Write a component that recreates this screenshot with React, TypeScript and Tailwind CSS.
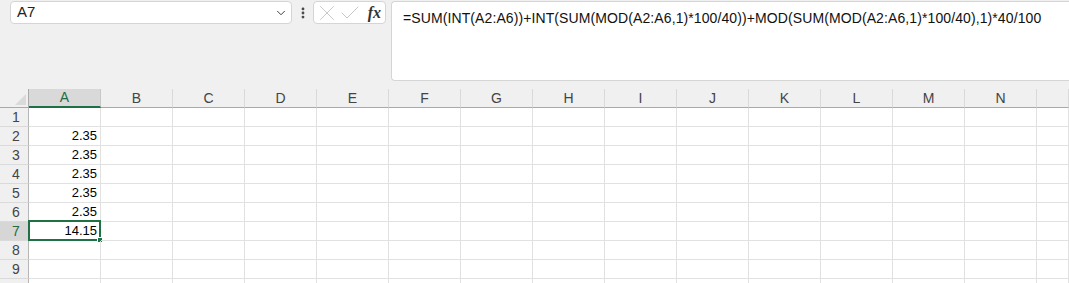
import React from 'react';
import { ChevronDown, EllipsisVertical, X, Check } from 'lucide-react';

const COLS = ['A', 'B', 'C', 'D', 'E', 'F', 'G', 'H', 'I', 'J', 'K', 'L', 'M', 'N', ''];
const VALUES: Record<number, string> = { 2: '2.35', 3: '2.35', 4: '2.35', 5: '2.35', 6: '2.35', 7: '14.15' };
const FORMULA = '=SUM(INT(A2:A6))+INT(SUM(MOD(A2:A6,1)*100/40))+MOD(SUM(MOD(A2:A6,1)*100/40),1)*40/100';

export default function App() {
	const rows = [1, 2, 3, 4, 5, 6, 7, 8, 9, 10];

	return (
		<div className="w-[1069px] h-[283px] overflow-hidden bg-[#f0f0f0] font-['Liberation_Sans',Arial,sans-serif] text-[#222]">
			{/* Toolbar - name box + formula bar */}
			<div className="h-[89px] flex items-start pt-[1px]">
				<div className="ml-[10px] w-[282px] h-[23px] bg-white border border-[#d5d5d5] rounded-[4px] flex items-center pl-[6px] pr-[3px]">
					<span className="flex-1 text-[15px] text-[#222]">A7</span>
					<ChevronDown size={14} strokeWidth={1.6} className="text-[#333]" />
				</div>
				<div className="w-[21px] h-[23px] flex items-center justify-center">
					<EllipsisVertical size={14} strokeWidth={2.8} className="text-[#444]" />
				</div>
				<div className="w-[73px] h-[23px] bg-white border border-[#d5d5d5] rounded-[4px] flex items-center pl-0 pr-[4px]">
					<X size={26} strokeWidth={0.8} className="shrink-0 text-[#c0c0c0]" />
					<Check size={24} strokeWidth={0.9} className="shrink-0 -ml-[2px] text-[#c0c0c0]" />
					<span className="ml-auto font-['Liberation_Serif',serif] italic font-bold text-[16px] text-[#333] leading-none">fx</span>
				</div>
				<div className="ml-[5px] flex-1 h-[80px] bg-white border border-[#d5d5d5] rounded-l-[4px] border-r-0 pl-[11px] pt-[4px]">
					<span className="text-[14px] tracking-[0.1px] text-[#111] whitespace-nowrap">{FORMULA}</span>
				</div>
			</div>

			{/* Sheet grid */}
			<div className="grid grid-cols-[29px_repeat(14,72px)_1fr] bg-white">
				{/* header row */}
				<div className="h-[19px] bg-[#f0f0f0] border-r border-b border-[#a9a9a9] relative">
					<div className="absolute right-[2px] bottom-[2px] w-0 h-0 border-l-[11px] border-l-transparent border-b-[11px] border-b-[#dadada]" />
				</div>
				{COLS.map((c) =>
					c === 'A' ? (
						<div key={c} className="h-[19px] bg-[#d9d9d9] border-r border-[#c8c8c8] border-b-2 border-b-[#1e7145] flex items-center justify-center text-[14px] text-[#1e6b44]">
							{c}
						</div>
					) : (
						<div key={c || 'o'} className="h-[19px] bg-[#f0f0f0] border-r border-[#dadada] border-b border-b-[#a9a9a9] flex items-center justify-center text-[14px] text-[#444]">
							{c}
						</div>
					)
				)}

				{rows.map((r) => (
					<React.Fragment key={r}>
						<div className={`h-[19px] border-r border-b border-r-[#b5b5b5] border-b-[#dadada] pl-[12px] flex items-center text-[14px] ${r === 7 ? 'bg-[#d6d6d6] text-[#1e6b44]' : 'bg-[#f0f0f0] text-[#444]'}`}>
							{r < 10 ? r : ''}
						</div>
						{COLS.map((c, i) => (
							<div key={c + r + i} className="h-[19px] border-r border-b border-[#e1e1e1] relative flex items-center justify-end pr-[3px] text-[13px] text-black">
								{i === 0 && VALUES[r]}
								{i === 0 && r === 7 && (
									<>
										<div className="absolute -left-[1px] -top-[2px] -right-[1px] -bottom-[1px] border-2 border-[#1e7145]" />
										<div className="absolute -right-[3px] -bottom-[3px] w-[6px] h-[6px] bg-[#1e7145] border border-white" />
									</>
								)}
							</div>
						))}
					</React.Fragment>
				))}
			</div>
		</div>
	);
}
